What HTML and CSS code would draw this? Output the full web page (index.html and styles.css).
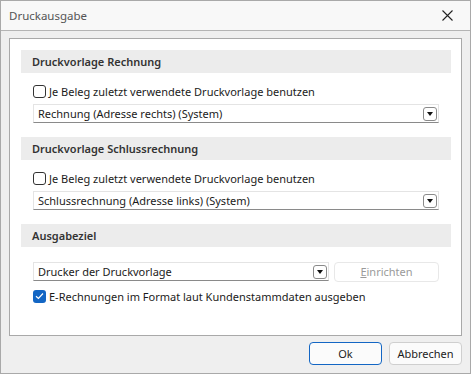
FILE: index.html
```html
<!DOCTYPE html>
<html lang="de">
<head>
    <meta charset="UTF-8">
    <title>Druckausgabe</title>
    <link rel="stylesheet" href="styles.css">
</head>
<body>
    <div class="window">
        <div class="titlebar">
            <span class="title">Druckausgabe</span>
            <svg class="close" width="11" height="11" viewBox="0 0 11 11">
                <path d="M0.5 0.5 L10.5 10.5 M10.5 0.5 L0.5 10.5" stroke="#222" stroke-width="1.1" fill="none"/>
            </svg>
        </div>

        <div class="panel">
            <div class="section">
                <div class="section-head">Druckvorlage Rechnung</div>
                <div class="section-body">
                    <label class="check"><span class="box"></span>Je Beleg zuletzt verwendete Druckvorlage benutzen</label>
                    <div class="combo"><span>Rechnung (Adresse rechts) (System)</span><span class="drop"></span></div>
                </div>
            </div>

            <div class="section">
                <div class="section-head">Druckvorlage Schlussrechnung</div>
                <div class="section-body">
                    <label class="check"><span class="box"></span>Je Beleg zuletzt verwendete Druckvorlage benutzen</label>
                    <div class="combo"><span>Schlussrechnung (Adresse links) (System)</span><span class="drop"></span></div>
                </div>
            </div>

            <div class="section">
                <div class="section-head">Ausgabeziel</div>
                <div class="section-body target">
                    <div class="combo-row">
                        <div class="combo short"><span>Drucker der Druckvorlage</span><span class="drop"></span></div>
                        <div class="btn-disabled"><u>E</u>inrichten</div>
                    </div>
                    <label class="check"><span class="box checked">
                        <svg width="9" height="8" viewBox="0 0 9 8"><path d="M1 4.2 L3.4 6.5 L8 1.5" stroke="#fff" stroke-width="1.2" fill="none"/></svg>
                    </span>E-Rechnungen im Format laut Kundenstammdaten ausgeben</label>
                </div>
            </div>
        </div>

        <div class="footer">
            <div class="btn primary">Ok</div>
            <div class="btn">Abbrechen</div>
        </div>
    </div>
</body>
</html>
```

FILE: styles.css
```css
body {
    margin: 0;
    font-family: "Noto Sans", "Open Sans", sans-serif;
    font-size: 11px;
    color: #1b1b1b;
}

.window {
    width: 471px;
    height: 374px;
    box-sizing: border-box;
    border: 1px solid #a9a9a9;
    background-color: #efefef;
    display: flex;
    flex-direction: column;
}

.titlebar {
    height: 29px;
    background-color: #f8f8f8;
    border-bottom: 1px solid #b4b4b4;
    display: flex;
    align-items: center;
    justify-content: space-between;
    padding: 0 17px 0 8px;
    font-size: 11.5px;
}

.title {
    color: #555;
}

.panel {
    margin: 7px 8px 0 8px;
    height: 298px;
    box-sizing: border-box;
    border: 1px solid #a9a9a9;
    background-color: #fff;
    padding: 11px 10px 0 11px;
}

.section-head {
    height: 23px;
    line-height: 23px;
    background-color: #ececec;
    padding-left: 11px;
    font-weight: 600;
    color: #333;
}

.section-body {
    padding: 8px 12px 14px 12px;
    display: flex;
    flex-direction: column;
    gap: 3px;
}

.section-body.target {
    padding-top: 15px;
    gap: 4px;
}

.check {
    height: 20px;
    display: flex;
    align-items: center;
    gap: 3px;
}

.box {
    width: 11px;
    height: 11px;
    border: 1px solid #333;
    border-radius: 3px;
    background-color: #fff;
    display: flex;
    align-items: center;
    justify-content: center;
}

.box.checked {
    width: 13px;
    height: 13px;
    border: none;
    background-color: #1366c4;
}

.combo {
    height: 19px;
    box-sizing: border-box;
    border: 1px solid #e4e4e4;
    border-bottom-color: #8a8a8a;
    display: flex;
    align-items: center;
    justify-content: space-between;
    padding: 0 1px 0 4px;
}

.drop {
    width: 12px;
    height: 12px;
    border: 1px solid #8a8a8a;
    border-radius: 3px;
    position: relative;
}

.drop::after {
    content: "";
    position: absolute;
    left: 3px;
    top: 4px;
    border-left: 3px solid transparent;
    border-right: 3px solid transparent;
    border-top: 4px solid #111;
}

.combo-row {
    display: flex;
    gap: 5px;
}

.combo.short {
    width: 296px;
}

.btn-disabled {
    flex: 1;
    height: 20px;
    box-sizing: border-box;
    border: 1px solid #e8e8e8;
    border-radius: 4px;
    color: #9a9a9a;
    text-align: center;
    line-height: 18px;
}

.footer {
    display: flex;
    justify-content: flex-end;
    gap: 7px;
    padding: 6px 8px 0 0;
}

.btn {
    width: 73px;
    height: 23px;
    box-sizing: border-box;
    border: 1px solid #cfcfcf;
    border-radius: 4px;
    background-color: #fbfbfb;
    text-align: center;
    line-height: 21px;
}

.btn.primary {
    border-color: #1366c4;
}
```
